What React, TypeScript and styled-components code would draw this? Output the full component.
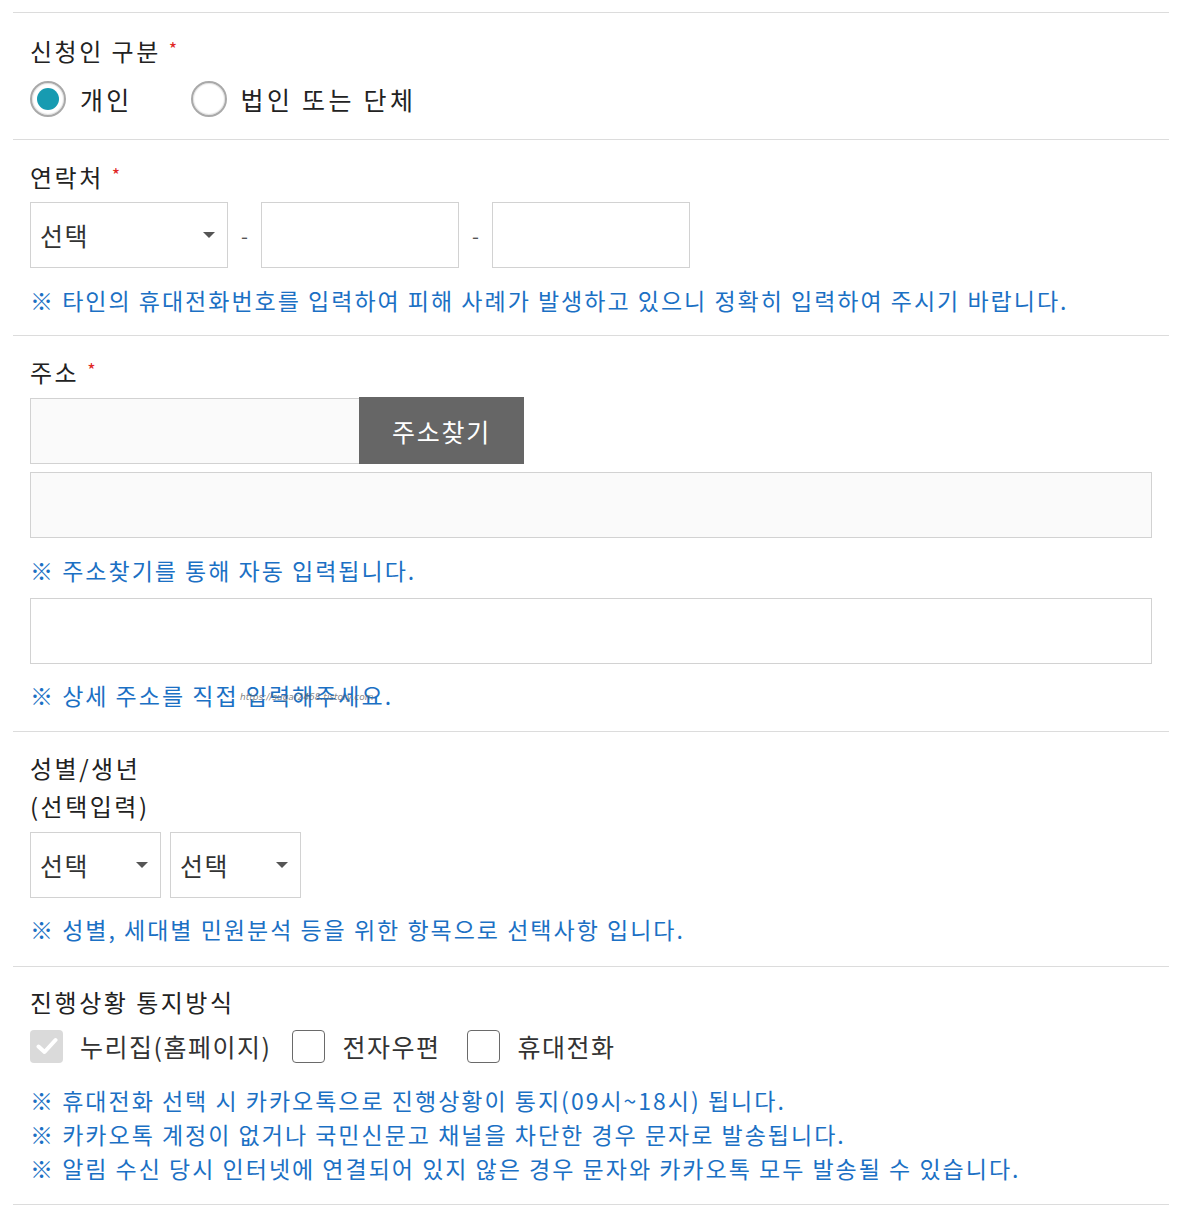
import React from "react";
import styled, { createGlobalStyle } from "styled-components";

const Global = createGlobalStyle`
  html, body { margin: 0; padding: 0; background: #fff; }
  body { font-family: "Noto Sans CJK KR", "Noto Sans", sans-serif; color: #222; }
  * { box-sizing: border-box; }
`;

const Form = styled.div`
  margin: 12px 10px 0 13px;
  border-bottom: 1px solid #dcdcdc;
`;

const Section = styled.section<{ $pt?: number; $pb?: number }>`
  border-top: 1px solid #dcdcdc;
  padding: ${(p) => p.$pt ?? 17}px 17px ${(p) => p.$pb ?? 19}px;
  display: flex;
  flex-direction: column;
  align-items: flex-start;
`;

const Label = styled.div`
  font-size: 24px;
  line-height: 38px;
  color: #222;
  letter-spacing: 2.5px;
`;

const Req = styled.span`
  color: #e0261f;
  font-size: 18px;
  margin-left: 8px;
  vertical-align: 5px;
  letter-spacing: 0;
`;

const Gap = styled.div<{ $h: number }>`
  height: ${(p) => p.$h}px;
  flex: none;
`;

const RadioRow = styled.div`
  display: flex;
  align-items: center;
  height: 36px;
`;

const RadioItem = styled.label`
  display: flex;
  align-items: center;
  margin-right: 58px;
`;

const RadioCircle = styled.span<{ $on?: boolean }>`
  width: 36px;
  height: 36px;
  border-radius: 50%;
  border: 2px solid #a9a9a9;
  box-shadow: inset 0 0 1px 1px #e2e2e2;
  background: #fff;
  display: flex;
  align-items: center;
  justify-content: center;
  &::after {
    content: "";
    display: ${(p) => (p.$on ? "block" : "none")};
    width: 22px;
    height: 22px;
    border-radius: 50%;
    background: #179bb1;
  }
`;

const OptText = styled.span`
  font-size: 25px;
  line-height: 36px;
  margin-left: 14px;
  color: #222;
  letter-spacing: 3.3px;
`;

const Row = styled.div<{ $gap?: number }>`
  display: flex;
  align-items: center;
  gap: ${(p) => p.$gap ?? 0}px;
`;

const SelectBox = styled.div<{ $w: number }>`
  width: ${(p) => p.$w}px;
  height: 66px;
  border: 1px solid #d2d2d2;
  background: #fff;
  display: flex;
  align-items: center;
  justify-content: space-between;
  padding: 0 12px 0 9px;
  font-size: 25px;
  letter-spacing: 1.5px;
  color: #333;
`;

const Arrow = styled.span`
  width: 0;
  height: 0;
  border-left: 6px solid transparent;
  border-right: 6px solid transparent;
  border-top: 6px solid #555;
`;

const Dash = styled.span`
  width: 33px;
  text-align: center;
  font-size: 20px;
  color: #555;
`;

const Input = styled.div<{ $w?: number; $bg?: string }>`
  width: ${(p) => (p.$w ? `${p.$w}px` : "100%")};
  height: 66px;
  border: 1px solid #d2d2d2;
  background: ${(p) => p.$bg ?? "#fff"};
  flex: none;
`;

const FullWidth = styled.div`
  align-self: stretch;
`;

const FindBtn = styled.button`
  width: 165px;
  height: 67px;
  border: none;
  background: #666;
  color: #fff;
  font-family: inherit;
  font-size: 25px;
  letter-spacing: 1.8px;
  padding: 0;
  margin-left: -1px;
  cursor: pointer;
`;

const Note = styled.div`
  position: relative;
  font-size: 23px;
  line-height: 34px;
  color: #1b70c4;
  letter-spacing: 2px;
  white-space: nowrap;
`;

const Watermark = styled.span`
  position: absolute;
  left: 210px;
  top: 14px;
  font-size: 9px;
  line-height: 11px;
  font-style: italic;
  letter-spacing: 0;
  color: rgba(100, 100, 100, 0.8);
  font-family: "DejaVu Sans", sans-serif;
`;

const CheckItem = styled.label<{ $mr: number }>`
  display: flex;
  align-items: center;
  margin-right: ${(p) => p.$mr}px;
`;

const CheckBox = styled.span<{ $disabled?: boolean }>`
  width: 33px;
  height: 33px;
  border-radius: 4px;
  border: ${(p) => (p.$disabled ? "none" : "1.5px solid #6a6a6a")};
  background: ${(p) => (p.$disabled ? "#dadada" : "#fff")};
  display: flex;
  align-items: center;
  justify-content: center;
`;

const CheckText = styled.span`
  font-size: 25px;
  line-height: 36px;
  margin-left: 17px;
  color: #333;
  letter-spacing: 1.5px;
`;

const Check = () => (
  <svg width="22" height="18" viewBox="0 0 22 18" fill="none">
    <path d="M2.5 9.5 L8.5 15 L19.5 3" stroke="#fff" strokeWidth="4" strokeLinecap="round" strokeLinejoin="round" />
  </svg>
);

export default function App() {
  return (
    <>
      <Global />
      <Form>
        <Section $pt={16} $pb={22}>
          <Label>
            신청인 구분<Req>*</Req>
          </Label>
          <Gap $h={11} />
          <RadioRow>
            <RadioItem>
              <RadioCircle $on />
              <OptText>개인</OptText>
            </RadioItem>
            <RadioItem>
              <RadioCircle />
              <OptText>법인 또는 단체</OptText>
            </RadioItem>
          </RadioRow>
        </Section>

        <Section $pt={15} $pb={18}>
          <Label>
            연락처<Req>*</Req>
          </Label>
          <Gap $h={6} />
          <Row>
            <SelectBox $w={198}>
              <span>선택</span>
              <Arrow />
            </SelectBox>
            <Dash>-</Dash>
            <Input $w={198} />
            <Dash>-</Dash>
            <Input $w={198} />
          </Row>
          <Gap $h={15} />
          <Note>※ 타인의 휴대전화번호를 입력하여 피해 사례가 발생하고 있으니 정확히 입력하여 주시기 바랍니다.</Note>
        </Section>

        <Section $pt={14} $pb={19}>
          <Label>
            주소<Req>*</Req>
          </Label>
          <Gap $h={6} />
          <Row>
            <Input $w={330} $bg="#fafafa" />
            <FindBtn type="button">주소찾기</FindBtn>
          </Row>
          <Gap $h={8} />
          <FullWidth>
            <Input $bg="#fafafa" />
          </FullWidth>
          <Gap $h={15} />
          <Note>※ 주소찾기를 통해 자동 입력됩니다.</Note>
          <Gap $h={11} />
          <FullWidth>
            <Input />
          </FullWidth>
          <Gap $h={14} />
          <Note>
            ※ 상세 주소를 직접 입력해주세요.
            <Watermark>https://sugar2468.tistory.com</Watermark>
          </Note>
        </Section>

        <Section $pt={17} $pb={20}>
          <Label>
            성별/생년
            <br />
            (선택입력)
          </Label>
          <Gap $h={7} />
          <Row $gap={9}>
            <SelectBox $w={131}>
              <span>선택</span>
              <Arrow />
            </SelectBox>
            <SelectBox $w={131}>
              <span>선택</span>
              <Arrow />
            </SelectBox>
          </Row>
          <Gap $h={14} />
          <Note>※ 성별, 세대별 민원분석 등을 위한 항목으로 선택사항 입니다.</Note>
        </Section>

        <Section $pt={16} $pb={19}>
          <Label>진행상황 통지방식</Label>
          <Gap $h={7} />
          <RadioRow>
            <CheckItem $mr={21}>
              <CheckBox $disabled>
                <Check />
              </CheckBox>
              <CheckText>누리집(홈페이지)</CheckText>
            </CheckItem>
            <CheckItem $mr={27}>
              <CheckBox />
              <CheckText>전자우편</CheckText>
            </CheckItem>
            <CheckItem $mr={0}>
              <CheckBox />
              <CheckText>휴대전화</CheckText>
            </CheckItem>
          </RadioRow>
          <Gap $h={19} />
          <Note>※ 휴대전화 선택 시 카카오톡으로 진행상황이 통지(09시~18시) 됩니다.</Note>
          <Note>※ 카카오톡 계정이 없거나 국민신문고 채널을 차단한 경우 문자로 발송됩니다.</Note>
          <Note>※ 알림 수신 당시 인터넷에 연결되어 있지 않은 경우 문자와 카카오톡 모두 발송될 수 있습니다.</Note>
        </Section>
      </Form>
    </>
  );
}
